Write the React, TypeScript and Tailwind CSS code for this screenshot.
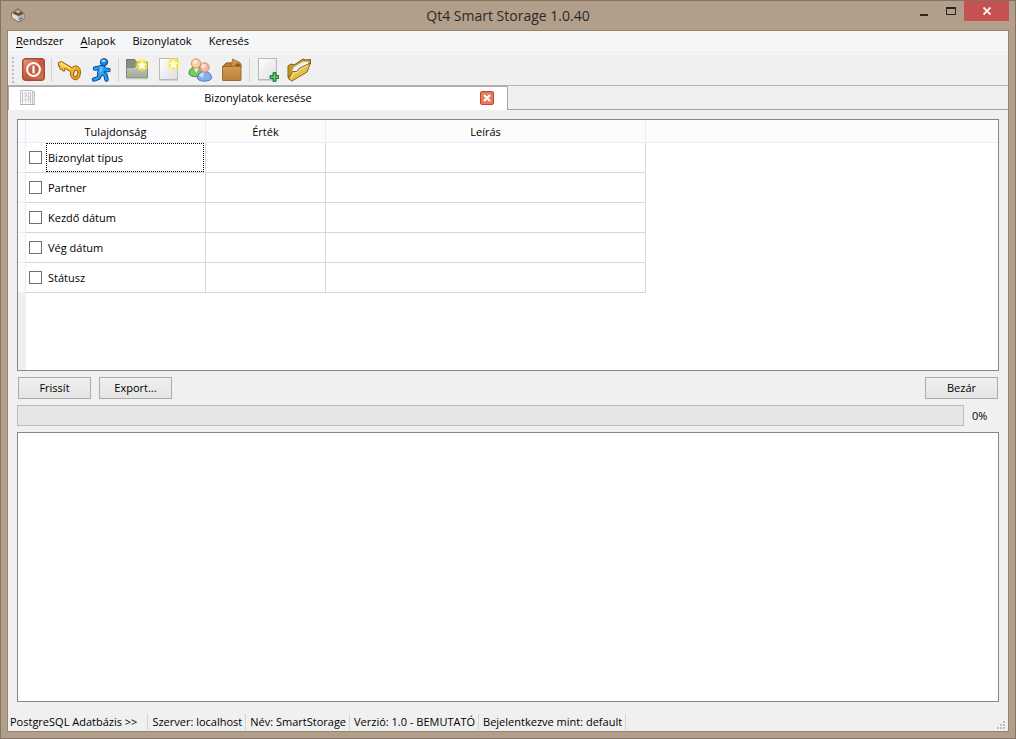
import { useState } from "react";
import type { ReactNode } from "react";

const menus = ["Rendszer", "Alapok", "Bizonylatok", "Keresés"];

const properties = [
  "Bizonylat típus",
  "Partner",
  "Kezdő dátum",
  "Vég dátum",
  "Státusz",
];

const statusItems = [
  "PostgreSQL Adatbázis >>",
  "Szerver: localhost",
  "Név: SmartStorage",
  "Verzió: 1.0 - BEMUTATÓ",
  "Bejelentkezve mint: default",
];

function AppIcon() {
  return (
    <svg className="h-4 w-4" viewBox="0 0 16 16">
      <path d="M1.5 6L8 1.500l6 5V12l-5.500 3L1.500 10.500z" fill="#8f8b86" stroke="#6b6661" strokeWidth="0.800" />
      <path d="M2 6.500l6.500 3V14.500L2 10.300z" fill="#dedede" />
      <path d="M8.500 9.500L14 7v4.800l-5.500 2.700z" fill="#b5b5b5" />
      <path d="M3.500 6L8 2.500l5 4-4.500 2z" fill="#4a4037" />
      <path d="M5 4.800l2.500-2.300 3.500 2.300-2.500 2z" fill="#c9a97c" />
      <path d="M9.500 11.500l3-1.500v1.500l-3 1.500z" fill="#666" />
    </svg>
  );
}

function PowerIcon() {
  return (
    <svg className="h-6 w-6" viewBox="0 0 24 24">
      <defs>
        <linearGradient id="power" x1="0" y1="0" x2="1" y2="1">
          <stop offset="0" stopColor="#e0a088" />
          <stop offset="0.5" stopColor="#c4583a" />
          <stop offset="1" stopColor="#cf775a" />
        </linearGradient>
      </defs>
      <rect x=".7" y=".7" width="21.600" height="21.600" rx="3" fill="url(#power)" stroke="#a84a32" strokeWidth="1.400" />
      <circle cx="11.500" cy="11.500" r="6.400" fill="none" stroke="#fff" strokeWidth="2" />
      <path d="M11.500 7.700v7.600" stroke="#fff" strokeWidth="2.200" />
    </svg>
  );
}

function KeyIcon() {
  return (
    <svg className="h-6 w-6" viewBox="0 0 24 24">
      <defs>
        <linearGradient id="key" x1="0" y1="0" x2="1" y2="1">
          <stop offset="0" stopColor="#ffd65a" />
          <stop offset="1" stopColor="#e8960c" />
        </linearGradient>
      </defs>
      <path
        d="M1.500 4.500l3-1 10.500 6.200c2-2.400 6-2.600 7.700.7 1.600 3.400.8 9.700-3 11.200-4 1-6.800-3.200-6.200-7.800L8 10.200l-.6 3-1.800-.4-.4-1.700-2 .4-.7-3.500-1 .2z"
        fill="url(#key)"
        stroke="#9c5c0a"
        strokeWidth="1"
        strokeLinejoin="round"
      />
      <ellipse cx="18.700" cy="15.500" rx="1.900" ry="3.300" transform="rotate(18 18.700 15.500)" fill="#efefef" stroke="#9c5c0a" />
      <path d="M4 5.500l9 5" stroke="#fff0a8" strokeWidth="1" />
    </svg>
  );
}

function RunnerIcon() {
  const limbs = "M6 10.500L12 9.500M14.500 10L16.500 12L19.500 12M12 14.500L16.500 17L17.500 21.500M11.500 15.500L9.500 20L5 21.500";
  return (
    <svg className="h-6 w-6" viewBox="0 0 24 24" strokeLinecap="round" strokeLinejoin="round" fill="none">
      <path d={limbs} stroke="#0a3c86" strokeWidth="4.400" />
      <path d="M13 10.500L11.500 15" stroke="#0a3c86" strokeWidth="7" />
      <path d={limbs} stroke="#1e9bf2" strokeWidth="2.800" />
      <path d="M13 10.500L11.500 15" stroke="#2ba6f5" strokeWidth="5.200" />
      <circle cx="15" cy="4.200" r="3.600" fill="#2185e0" stroke="#0a3c86" />
      <ellipse cx="14.500" cy="2.900" rx="2.200" ry="1.300" fill="#8bd2fc" />
      <path d="M12.500 10l-1 3" stroke="#6fcbfb" strokeWidth="1.800" />
    </svg>
  );
}

function Star({ x, y }: { x: number; y: number }) {
  return (
    <g transform={`translate(${x} ${y})`}>
      <circle r="6.500" fill="#fbf14a" opacity="0.400" />
      <circle r="5" fill="#f7ea20" opacity="0.800" />
      <path d="M0-4.800l1.400 3.200 3.400.3-2.600 2.300.8 3.400L0 2.700l-3 1.700.8-3.400-2.600-2.300 3.400-.3z" fill="#fffff0" />
    </g>
  );
}

function NewFolderIcon() {
  return (
    <svg className="h-6 w-6" viewBox="0 0 24 24">
      <defs>
        <linearGradient id="folder" x1="0" y1="0" x2="0" y2="1">
          <stop offset="0" stopColor="#c5c9b9" />
          <stop offset="1" stopColor="#a3a895" />
        </linearGradient>
      </defs>
      <path d="M2.500 1.500h8l2 2.500h11V10h-21z" fill="#8b8f82" stroke="#73776a" />
      <path d="M2.500 9.500l8 0 2-2h11v12.500h-21z" fill="url(#folder)" stroke="#83887a" strokeLinejoin="round" />
      <path d="M2 21h22" stroke="#d2d2cf" />
      <Star x={18} y={7} />
    </svg>
  );
}

function Sheet() {
  return (
    <>
      <defs>
        <linearGradient id="sheet" x1="0" y1="0" x2="1" y2="1">
          <stop offset="0" stopColor="#ffffff" />
          <stop offset="1" stopColor="#dedede" />
        </linearGradient>
      </defs>
      <rect x="3.500" y=".5" width="18" height="21" fill="url(#sheet)" stroke="#b9b9b9" />
      <path d="M3 22.500h19" stroke="#d4d4d4" />
    </>
  );
}

function NewPageIcon() {
  return (
    <svg className="h-6 w-6 overflow-visible" viewBox="0 0 24 24">
      <Sheet />
      <Star x={17.500} y={6} />
    </svg>
  );
}

function PagePlusIcon() {
  return (
    <svg className="h-6 w-6" viewBox="0 0 24 24">
      <Sheet />
      <path d="M18 14.500h3v3h3v3h-3v3h-3v-3h-3v-3h3z" fill="#3ba04a" stroke="#14702a" strokeWidth="0.800" />
      <path d="M19.500 15.500v7M16 19h7" stroke="#7ccc73" />
    </svg>
  );
}

function UsersIcon() {
  return (
    <svg className="h-6 w-6" viewBox="0 0 24 24">
      <path d="M1 16c0-5 3-7 7-7s7 2 7 7c-1 3-12 4-14 0z" fill="#7cc860" stroke="#3d9430" />
      <path d="M6 10l2 5 3-5z" fill="#e8f7df" />
      <circle cx="8" cy="5.500" r="4.700" fill="#f6cf9c" stroke="#c98a4b" strokeWidth="0.800" />
      <circle cx="7" cy="4" r="2.200" fill="#fce9cf" />
      <path d="M9.500 20.500c0-5 3-7 7-7s7 2 7 7c-1 3-12 4-14 0z" fill="#84aee8" stroke="#4a79c4" />
      <path d="M11 18c1-3 3-4 5-4l-1 6z" fill="#c4d9f7" />
      <circle cx="16.500" cy="9.500" r="4.700" fill="#f7b9a6" stroke="#cf7462" strokeWidth="0.800" />
      <circle cx="15.500" cy="8" r="2.200" fill="#fde0d6" />
    </svg>
  );
}

function BoxIcon() {
  return (
    <svg className="h-6 w-6" viewBox="0 0 24 24">
      <defs>
        <linearGradient id="box" x1="0" y1="0" x2="0" y2="1">
          <stop offset="0" stopColor="#d29a54" />
          <stop offset="1" stopColor="#bd7f39" />
        </linearGradient>
      </defs>
      <path d="M2.500 9L6 5h13l2.500 4z" fill="#8f5a25" stroke="#85521f" strokeWidth="0.800" />
      <rect x="2.500" y="8.500" width="18.500" height="14" rx="0.500" fill="url(#box)" stroke="#a36a2e" />
      <path d="M2.500 8.500L6.500 5H13l-1.500 3.500z" fill="#bb7d38" stroke="#955f27" strokeWidth="0.700" />
      <path d="M11.500 8.500L12.500 1l7.500 3.500 1.500 2L17 5.500l-3 3z" fill="#cf9650" stroke="#955f27" strokeWidth="0.700" strokeLinejoin="round" />
    </svg>
  );
}

function OpenFolderIcon() {
  return (
    <svg className="h-6 w-6" viewBox="0 0 24 24">
      <path d="M1 19.500V8l3-2 3 1L16 1l3 1 4.500-.5v4z" fill="#c99a2b" stroke="#80600f" strokeLinejoin="round" />
      <path d="M4.500 15l2-6L16 3.500h6l-2 6-11 6z" fill="#fafafa" stroke="#a3a3a3" strokeWidth="0.700" />
      <path d="M7 10.500l10-5.500" stroke="#d5d5d5" strokeWidth="0.800" />
      <path d="M1.500 21l4-7.500h4l3-3.500L23.500 5l-3.500 9L5 23z" fill="#e7bf4b" stroke="#8a6914" strokeLinejoin="round" />
      <path d="M4 20.500l2.500-5.500h3.500l3-3.500 8-4" fill="none" stroke="#f8e49b" />
    </svg>
  );
}

function LedgerIcon() {
  return (
    <svg className="h-4 w-4" viewBox="0 0 16 16" fill="none">
      <path d="M3.500 1.500h11v12h-11z" fill="#e6e6e6" stroke="#c4c4c4" />
      <path d="M.5.500h12v14H.5z" fill="#f4f4f4" stroke="#c6c6c6" />
      <path d="M2.500 2v11M10.500 2v11" stroke="#c4c4c4" />
      <path d="M4 3.500h6M4 6.500h6M4 9.500h6M5.500 2v10M8.500 2v10" stroke="#dadada" />
      <path d="M6 5.500h1M8 8.500h1" stroke="#d99b9b" />
      <path d="M0 14.500h15" stroke="#b0b0b0" />
    </svg>
  );
}

function ToolButton({ label, children }: { label: string; children: ReactNode }) {
  return (
    <button type="button" aria-label={label} className="flex h-7 w-8 items-center justify-center hover:bg-white/60">
      {children}
    </button>
  );
}

function Separator() {
  return <div className="mx-px h-6 w-px bg-[#d5d5d5]" />;
}

function PushButton({ children }: { children: ReactNode }) {
  return (
    <button
      type="button"
      className="h-[22px] w-[73px] border border-[#acacac] bg-linear-to-b from-[#f0f0f0] to-[#e4e4e4] leading-4 hover:border-[#7eb4ea]"
    >
      {children}
    </button>
  );
}

function TitleBar() {
  return (
    <header className="flex h-[29px] items-start">
      <div className="flex w-[133px] pt-[6px] pl-[3px]">
        <AppIcon />
      </div>
      <h1 className="flex-1 pt-[5px] text-center text-sm leading-5 text-[#2a2a2a]">
        Qt4 Smart Storage 1.0.40
      </h1>
      <div className="flex w-[133px] justify-end">
        <button type="button" aria-label="Kis méret" className="flex h-[21px] w-7 items-center justify-center">
          <svg className="h-3 w-3" viewBox="0 0 12 12">
            <path d="M4 8h8v2H4z" fill="#262626" />
          </svg>
        </button>
        <button type="button" aria-label="Teljes méret" className="flex h-5 w-7 items-center justify-center">
          <svg className="h-3 w-3" viewBox="0 0 12 12">
            <path d="M2 2h10v8H2zM3 4v5h8V4z" fill="#262626" fillRule="evenodd" />
          </svg>
        </button>
        <button type="button" aria-label="Bezárás" className="flex h-5 w-[45px] items-center justify-center bg-[#c75050]">
          <svg className="h-2 w-2" viewBox="0 0 8 8">
            <path d="M.5.500l7 7M7.500.500l-7 7" stroke="#fff" strokeWidth="1.800" />
          </svg>
        </button>
      </div>
    </header>
  );
}

function MenuBar() {
  return (
    <nav className="flex h-[22px] items-center gap-[17px] border-b border-[#e8e8ec] bg-[#f5f6f7] px-2 pb-[2px]">
      {menus.map((menu, i) => (
        <button key={menu} type="button" className="leading-4">
          {i < 2 ? (
            <>
              <span className="underline underline-offset-2">{menu[0]}</span>
              {menu.slice(1)}
            </>
          ) : (
            menu
          )}
        </button>
      ))}
    </nav>
  );
}

function ToolBar() {
  return (
    <div className="flex h-[33px] items-center border-t border-b border-t-white border-b-[#b4b4b4] pl-1">
      <div className="mr-1 h-[26px] w-0 border-l-2 border-dotted border-[#bdbdbd]" />
      <ToolButton label="Kilépés"><PowerIcon /></ToolButton>
      <Separator />
      <ToolButton label="Bejelentkezés"><KeyIcon /></ToolButton>
      <ToolButton label="Felhasználó váltás"><RunnerIcon /></ToolButton>
      <Separator />
      <ToolButton label="Új csoport"><NewFolderIcon /></ToolButton>
      <ToolButton label="Új cikk"><NewPageIcon /></ToolButton>
      <ToolButton label="Partnerek"><UsersIcon /></ToolButton>
      <ToolButton label="Raktár"><BoxIcon /></ToolButton>
      <Separator />
      <ToolButton label="Új bizonylat"><PagePlusIcon /></ToolButton>
      <ToolButton label="Megnyitás"><OpenFolderIcon /></ToolButton>
    </div>
  );
}

function TabBar() {
  return (
    <div className="flex h-6">
      <div className="flex w-1/2 items-center border-t border-r border-l border-[#a8a8a8] bg-white pr-[13px] pb-[2px] pl-[11px]">
        <LedgerIcon />
        <span className="flex-1 text-center leading-4">Bizonylatok keresése</span>
        <button type="button" aria-label="Lap bezárása">
          <svg className="h-[14px] w-[14px]" viewBox="0 0 14 14">
            <rect x=".5" y=".5" width="13" height="13" rx="1.500" fill="#de7f5b" stroke="#d93b2b" />
            <path d="M4 4l6 6M10 4l-6 6" stroke="#fff" strokeWidth="2.200" />
          </svg>
        </button>
      </div>
      <div className="flex-1 border-b border-[#a0a0a0]" />
    </div>
  );
}

function PropertyTable() {
  const [checked, setChecked] = useState<Record<string, boolean>>({});

  return (
    <div className="h-[252px] shrink-0 overflow-hidden border border-[#828790] bg-white">
      <table className="h-full w-full table-fixed border-separate border-spacing-0">
        <colgroup>
          <col className="w-2" />
          <col className="w-[180px]" />
          <col className="w-[120px]" />
          <col className="w-[320px]" />
          <col />
        </colgroup>
        <thead>
          <tr className="h-[23px] bg-[#fcfcfc]">
            <td className="border-r border-b border-[#e5eefb]" />
            {["Tulajdonság", "Érték", "Leírás"].map((title) => (
              <th key={title} className="border-r border-b border-[#e5eefb] p-0 pt-px leading-4 font-normal">
                {title}
              </th>
            ))}
            <td className="border-b border-[#e5eefb]" />
          </tr>
        </thead>
        <tbody>
          {properties.map((name, i) => (
            <tr key={name} className="h-[30px]">
              <td className="border-r border-b border-[#e5eefb] bg-[#fcfcfc]" />
              <td className="border-r border-b border-[#d8d8d8] p-0">
                <label className="flex h-[29px] items-center pr-px pl-[3px]">
                  <input
                    type="checkbox"
                    checked={!!checked[name]}
                    onChange={() => setChecked({ ...checked, [name]: !checked[name] })}
                    className="mr-1 h-[13px] w-[13px] appearance-none border border-[#707070] bg-white checked:bg-[#707070]"
                  />
                  <span
                    className={
                      i === 0
                        ? "flex h-[29px] flex-1 items-center border border-dotted border-black pl-px leading-4"
                        : "flex-1 pl-[2px] leading-4"
                    }
                  >
                    {name}
                  </span>
                </label>
              </td>
              <td className="border-r border-b border-[#d8d8d8]" />
              <td className="border-r border-b border-[#d8d8d8]" />
              <td />
            </tr>
          ))}
          <tr>
            <td className="bg-[#f0f0f0]" />
            <td colSpan={4} />
          </tr>
        </tbody>
      </table>
    </div>
  );
}

function StatusBar() {
  return (
    <footer className="flex h-[29px] items-center">
      {statusItems.map((item) => (
        <span key={item} className="mt-[10px] border-r border-[#d5d5d5] pr-[3px] pl-1 leading-4 first:pl-[2px] first:pr-[10px]">
          {item}
        </span>
      ))}
      <svg className="mt-auto mr-[3px] mb-[2px] ml-auto h-2 w-2" viewBox="0 0 8 8" fill="#bfbfbf">
        <path d="M6 0h2v2H6zM3 3h2v2H3zM6 3h2v2H6zM0 6h2v2H0zM3 6h2v2H3zM6 6h2v2H6z" />
      </svg>
    </footer>
  );
}

export default function App() {
  const progress = 0;

  return (
    <div className="flex min-h-screen flex-col border border-[#857364] bg-[#b19e8b] px-[6px] pb-[6px] font-['Open_Sans','Noto_Sans',sans-serif] text-[11px] text-black">
      <TitleBar />
      <div className="flex flex-1 flex-col border border-[#958468] bg-[#f0f0f0]">
        <MenuBar />
        <ToolBar />
        <TabBar />
        <main className="flex flex-1 flex-col px-[9px] pt-[9px]">
          <PropertyTable />
          <div className="mt-[6px] flex gap-2 px-px">
            <PushButton>Frissít</PushButton>
            <PushButton>Export...</PushButton>
            <div className="ml-auto">
              <PushButton>Bezár</PushButton>
            </div>
          </div>
          <div className="mt-[6px] flex items-center">
            <div
              role="progressbar"
              aria-label="Folyamat"
              aria-valuenow={progress}
              className="h-[21px] flex-1 border border-[#bcbcbc] bg-[#e6e6e6]"
            >
              <div className="h-full bg-[#06b025]" style={{ width: `${progress}%` }} />
            </div>
            <span className="w-[35px] pl-2 leading-4">{progress}%</span>
          </div>
          <textarea
            readOnly
            aria-label="Találatok"
            className="mt-[6px] w-full flex-1 resize-none border border-[#828790] bg-white outline-none"
          />
        </main>
        <StatusBar />
      </div>
    </div>
  );
}
